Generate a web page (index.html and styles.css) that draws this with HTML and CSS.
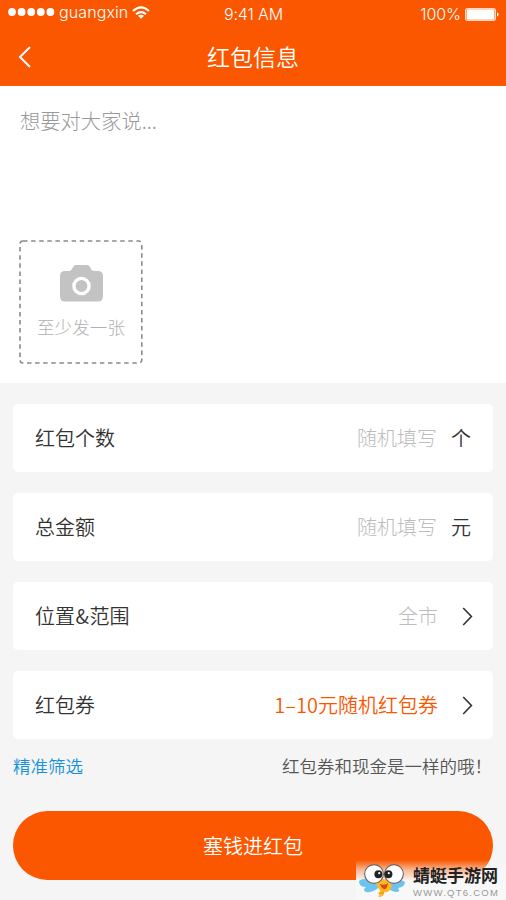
FILE: index.html
```html
<!DOCTYPE html>
<html lang="zh-CN">
<head>
<meta charset="utf-8">
<title>红包信息</title>
<link rel="stylesheet" href="styles.css">
</head>
<body>
<div class="screen">
  <header class="header">
    <div class="status">
      <div class="carrier">
        <svg class="signal" width="47" height="10" viewBox="0 0 47 10" fill="#fff"><circle cx="4" cy="5" r="3.9"/><circle cx="13.6" cy="5" r="3.9"/><circle cx="23.2" cy="5" r="3.9"/><circle cx="32.8" cy="5" r="3.9"/><circle cx="42.4" cy="5" r="3.9"/></svg>
        <span class="carrier-name">guangxin</span>
        <svg class="wifi" width="18" height="13" viewBox="0 0 18 13" fill="none" stroke="#fff" stroke-width="2"><path d="M1 5Q9-2.2 17 5M4 8.2Q9 4 14 8.2"/><path d="M9 12.8L5.9 9.8Q9 7.6 12.1 9.8Z" fill="#fff" stroke="none"/></svg>
      </div>
      <span class="time">9:41 AM</span>
      <div class="power">
        <span>100%</span>
        <svg width="34" height="13" viewBox="0 0 34 13"><rect x=".5" y=".5" width="30" height="12" rx="1.5" fill="none" stroke="#fff" stroke-opacity=".75"/><rect x="1.5" y="1.2" width="28" height="10.6" rx=".5" fill="#fff"/><path d="M32 4.5q1.6 0 1.6 2t-1.6 2z" fill="#fff"/></svg>
      </div>
    </div>
    <div class="navbar">
      <svg class="back" width="14" height="22" viewBox="0 0 14 22" fill="none" stroke="#fff" stroke-width="2"><path d="M12 1L2 11L12 21"/></svg>
      <h1>红包信息</h1>
    </div>
  </header>

  <section class="compose">
    <p class="prompt">想要对大家说...</p>
    <div class="upload">
      <svg class="frame" width="124" height="124" viewBox="0 0 124 124" fill="none" stroke="#8b8b8b" stroke-width="1.6"><rect x="1" y="1" width="121.8" height="122" rx="3" stroke-dasharray="4.5 3.6"/></svg>
      <svg class="camera" width="43" height="37" viewBox="0 0 43 37"><path d="M5 6H9Q11 6 12 4L13 2Q14 0 16 0H27Q29 0 30 2L31 4Q32 6 34 6H38Q43 6 43 11V31Q43 36.5 38 36.5H5Q0 36.5 0 31V11Q0 6 5 6Z" fill="#c3c3c3"/><circle cx="21.5" cy="21" r="7.6" fill="none" stroke="#fff" stroke-width="3.4"/></svg>
      <span>至少发一张</span>
    </div>
  </section>

  <main class="form">
    <div class="card"><span class="label">红包个数</span><span class="value">随机填写</span><span class="unit">个</span></div>
    <div class="card"><span class="label">总金额</span><span class="value">随机填写</span><span class="unit">元</span></div>
    <div class="card"><span class="label">位置<span class="amp">&amp;</span>范围</span><span class="value">全市</span><svg class="arrow" width="11" height="19" viewBox="0 0 11 19" fill="none" stroke="#333" stroke-width="1.6"><path d="M1.2 1L9.4 9.5L1.2 18"/></svg></div>
    <div class="card"><span class="label">红包券</span><span class="value coupon">1–10元随机红包券</span><svg class="arrow" width="11" height="19" viewBox="0 0 11 19" fill="none" stroke="#333" stroke-width="1.6"><path d="M1.2 1L9.4 9.5L1.2 18"/></svg></div>
    <div class="notes"><a class="filter">精准筛选</a><span class="hint">红包券和现金是一样的哦！</span></div>
    <button class="submit">塞钱进红包</button>
  </main>

  <div class="watermark">
    <svg class="mascot" width="46" height="34" viewBox="0 0 46 34">
      <path d="M14 17Q4 13 0 17Q0 23 7 23Q3 26 7 28Q15 29 21 22ZM32 18Q41 14 46 18Q46 23 39 24Q42 28 37 28Q30 27 27 21Z" fill="#6cc3f0"/>
      <path d="M19 17Q25 13 30 17Q35 22 31 26Q28 29 25 28Q26 33 19 33Q22 31 19 29Q23 28 20 25Q16 21 19 17Z" fill="#ffb91d"/>
      <path d="M21 20Q26 22 29 19Q28 26 25 25Q22 24 21 20Z" fill="#d9481c"/>
      <path d="M20 29Q24 30 25 28" fill="none" stroke="#e88a10"/>
      <circle cx="15" cy="10" r="9.4" fill="#fff" stroke="#6d6460" stroke-width="1.1"/><circle cx="35" cy="10" r="9.4" fill="#fff" stroke="#6d6460" stroke-width="1.1"/>
      <circle cx="19.4" cy="10.2" r="4" fill="#222"/><circle cx="29.4" cy="10.2" r="4" fill="#222"/>
      <circle cx="20.2" cy="9.2" r="1.1" fill="#fff"/><circle cx="29.8" cy="9.2" r="1.1" fill="#fff"/>
    </svg>
    <div class="brand"><strong>蜻蜓手游网</strong><span>WWW.QT6.COM</span></div>
  </div>
</div>
</body>
</html>
```
FILE: styles.css
```css
* { box-sizing: border-box; }
body {
  margin: 0;
  font-family: "Noto Sans CJK SC", sans-serif;
  font-weight: 300;
  color: #333;
}
svg { display: block; flex: none; }
.screen {
  position: relative;
  width: 506px;
  height: 900px;
  overflow: hidden;
  background: #f5f5f5;
}
.header {
  height: 86px;
  background: #fa5700;
  color: #fff;
}
.status {
  display: grid;
  grid-template-columns: 1fr auto 1fr;
  align-items: center;
  height: 28px;
  padding: 0 7px 0 8px;
  font: 300 16px/28px Inter, sans-serif;
  letter-spacing: -0.1px;
}
.carrier { display: flex; align-items: center; height: 25px; margin-top: -4px; }
.carrier-name { margin-left: 4px; letter-spacing: 0.1px; }
.wifi { margin-left: 4px; }
.power { display: flex; align-items: center; justify-content: flex-end; gap: 4px; }
.navbar {
  display: grid;
  grid-template-columns: 60px 1fr 60px;
  align-items: center;
  height: 57px;
}
.back { margin-left: 18px; }
h1 {
  margin: -2px 0 0;
  font-size: 23px;
  line-height: 56px;
  font-weight: 350;
  text-align: center;
}
.compose {
  height: 297px;
  padding: 19px 19px;
  background: #fff;
}
.prompt {
  height: 135px;
  margin: 0 0 0 1px;
  font-size: 20.3px;
  line-height: 30px;
  color: #999;
}
.upload {
  position: relative;
  display: flex;
  flex-direction: column;
  align-items: center;
  width: 124px;
  height: 124px;
  padding-top: 25px;
  font-size: 17.6px;
  line-height: 26px;
  color: #b0b0b0;
}
.upload span { margin-top: 12px; }
.frame { position: absolute; inset: 0; }
.form { padding: 20.5px 13px 0; }
.card {
  display: flex;
  align-items: center;
  height: 68.5px;
  margin-bottom: 20.5px;
  padding: 1px 22px 0;
  border-radius: 5px;
  background: #fff;
  font-size: 20px;
  line-height: 30px;
}
.label, .unit { font-weight: 350; }
.label { flex: 1; }
.amp { padding: 0 0.5px; }
.value { color: #bcbcbc; }
.unit { width: 20px; margin-left: 14px; }
.arrow { margin-left: 24px; margin-right: -2px; }
.value.coupon { color: #fa5700; font-weight: 350; }
.notes {
  display: flex;
  justify-content: space-between;
  height: 58px;
  margin-top: -6.5px;
  font-size: 17.5px;
  line-height: 26px;
}
.filter { color: #1691de; font-weight: 350; }
.hint { color: #555; font-weight: 350; margin-right: 1px; }
.submit {
  display: block;
  width: 480px;
  height: 69px;
  padding: 0;
  border: 0;
  border-radius: 35px;
  background: #fa5700;
  color: #fff;
  font: 350 20px/69px "Noto Sans CJK SC", sans-serif;
}
.watermark {
  position: absolute;
  right: 0;
  bottom: 0;
  display: flex;
  width: 150px;
  height: 40px;
  padding: 4px 0 0 3px;
  background: linear-gradient(rgba(248, 248, 248, 0), rgba(248, 248, 248, 0.6) 25%, rgba(248, 248, 248, 0.96) 50%);
}
.brand { display: flex; flex-direction: column; margin-left: 8px; }
.brand strong {
  font-size: 17px;
  line-height: 22px;
  font-weight: 700;
  color: #222;
  white-space: nowrap;
}
.brand span {
  font: 400 9.5px/13px "Liberation Sans", sans-serif;
  letter-spacing: 1.25px;
  color: #999;
  white-space: nowrap;
}
```
